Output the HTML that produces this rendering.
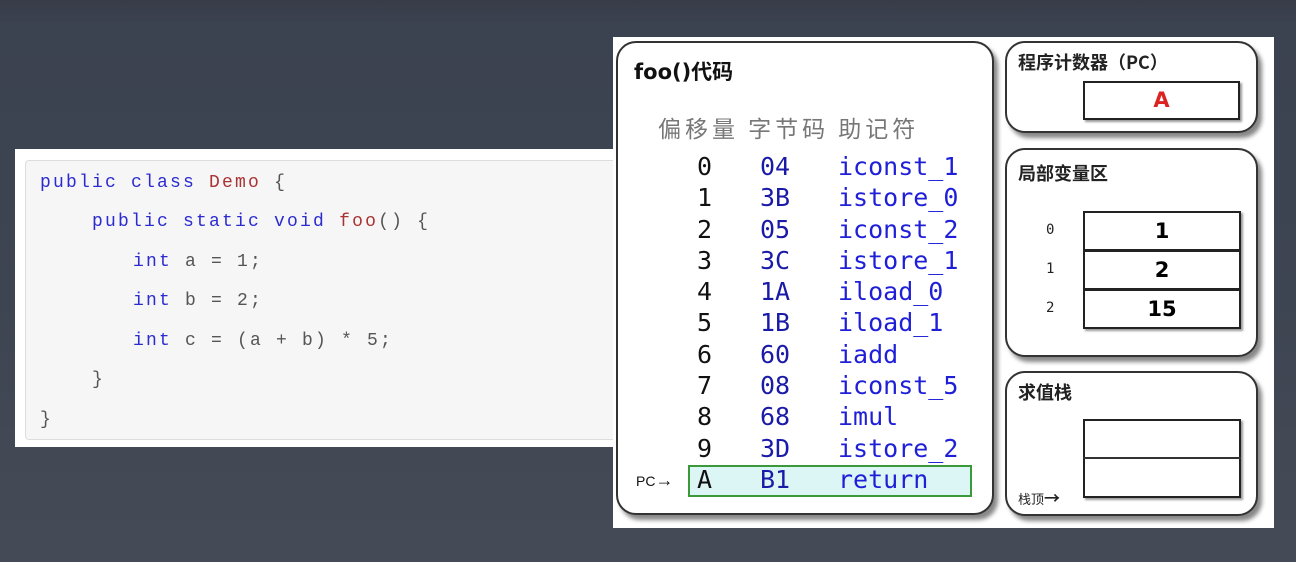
<!DOCTYPE html>
<html><head><meta charset="utf-8"><style>
*{margin:0;padding:0;box-sizing:border-box}
body{width:1296px;height:562px;overflow:hidden;background:linear-gradient(#383c48 0,#3b4250 25px,#3e4552 300px,#454b56 562px);position:relative;font-family:"Liberation Sans","Noto Sans CJK SC",sans-serif}
.abs{position:absolute}
#code{left:15px;top:149px;width:600px;height:298px;background:#fff}
#codein{left:25px;top:160px;width:600px;height:280px;background:#f6f6f7;border:1px solid #ddd;border-radius:4px}
.cl{position:absolute;font-family:"Liberation Mono",monospace;font-size:18px;letter-spacing:2.2px;color:#555;white-space:pre;line-height:20px}
.k{color:#2b2bd0}.r{color:#a33}
#img{left:613px;top:37px;width:661px;height:491px;background:#fff}
.box{position:absolute;background:#fff;border:2px solid #333;border-radius:20px;box-shadow:4px 5px 4px #888}
.m{position:absolute;font-family:"DejaVu Sans Mono","Liberation Mono",monospace;font-size:25px;line-height:31.3px;white-space:pre}
.cj{position:absolute;font-family:"Noto Sans CJK SC",sans-serif;font-weight:bold;color:#222}
.cell{position:absolute;border:2px solid #222;background:#fff;box-shadow:2px 2px 2px #999;font-family:"DejaVu Sans",sans-serif;font-weight:bold;font-size:21px;text-align:center}
</style></head><body>
<div id="code" class="abs"></div>
<div id="codein" class="abs"></div>
<div class="cl" style="left:40px;top:173px"><span class="k">public class</span> <span class="r">Demo</span> {</div>
<div class="cl" style="left:92px;top:212px"><span class="k">public static void</span> <span class="r">foo</span>() {</div>
<div class="cl" style="left:133px;top:252px"><span class="k">int</span> a = 1;</div>
<div class="cl" style="left:133px;top:291px"><span class="k">int</span> b = 2;</div>
<div class="cl" style="left:133px;top:331px"><span class="k">int</span> c = (a + b) * 5;</div>
<div class="cl" style="left:92px;top:370px">}</div>
<div class="cl" style="left:40px;top:410px">}</div>

<div id="img" class="abs"></div>
<div class="box" style="left:616px;top:41px;width:378px;height:474px"></div>
<div class="box" style="left:1005px;top:41px;width:253px;height:92px"></div>
<div class="box" style="left:1005px;top:148px;width:253px;height:209px"></div>
<div class="box" style="left:1005px;top:371px;width:253px;height:145px"></div>

<div class="abs" style="left:634px;top:56px;font-family:'DejaVu Sans','Noto Sans CJK SC',sans-serif;font-weight:bold;font-size:21px;color:#111">foo()代码</div>
<div class="cj" style="left:658px;top:110px;font-size:23px;color:#777;font-weight:normal;letter-spacing:4px">偏移量 字节码 助记符</div>
<div class="abs" style="left:688px;top:465px;width:284px;height:32px;background:#dcf6f6;border:2px solid #3a9a3a"></div>
<div class="m" style="left:697px;top:151px;color:#111">0
1
2
3
4
5
6
7
8
9
A</div>
<div class="m" style="left:760px;top:151px;color:#1a1aa8">04
3B
05
3C
1A
1B
60
08
68
3D
B1</div>
<div class="m" style="left:838px;top:151px;color:#1f1fd8">iconst_1
istore_0
iconst_2
istore_1
iload_0
iload_1
iadd
iconst_5
imul
istore_2
return</div>
<div class="abs" style="left:636px;top:470px;font-size:14px;color:#111">PC<span style="font-size:18px;font-weight:bold">→</span></div>

<div class="cj" style="left:1018px;top:49px;font-size:18px">程序计数器（PC）</div>
<div class="cell" style="left:1083px;top:81px;width:157px;height:39px;color:#d22;line-height:35px">A</div>
<div class="cj" style="left:1018px;top:160px;font-size:18px">局部变量区</div>
<div class="cell" style="left:1083px;top:211px;width:158px;height:118px"></div>
<div class="cell" style="left:1083px;top:211px;width:158px;height:40px;line-height:36px;box-shadow:none">1</div>
<div class="cell" style="left:1083px;top:250px;width:158px;height:40px;line-height:36px;box-shadow:none">2</div>
<div class="cell" style="left:1083px;top:289px;width:158px;height:40px;line-height:36px;box-shadow:none">15</div>
<div class="abs" style="left:1046px;top:211px;font-family:'DejaVu Sans Mono',monospace;font-size:14px;line-height:39px;color:#222;white-space:pre">0
1
2</div>
<div class="cj" style="left:1018px;top:379px;font-size:18px">求值栈</div>
<div class="cell" style="left:1083px;top:419px;width:158px;height:79px"></div>
<div class="abs" style="left:1083px;top:457px;width:158px;height:2px;background:#333"></div>
<div class="abs" style="left:1018px;top:485px;font-size:13px;color:#222;font-family:'Noto Sans CJK SC',sans-serif">栈顶<span style="font-size:16px;font-weight:bold">→</span></div>
</body></html>
